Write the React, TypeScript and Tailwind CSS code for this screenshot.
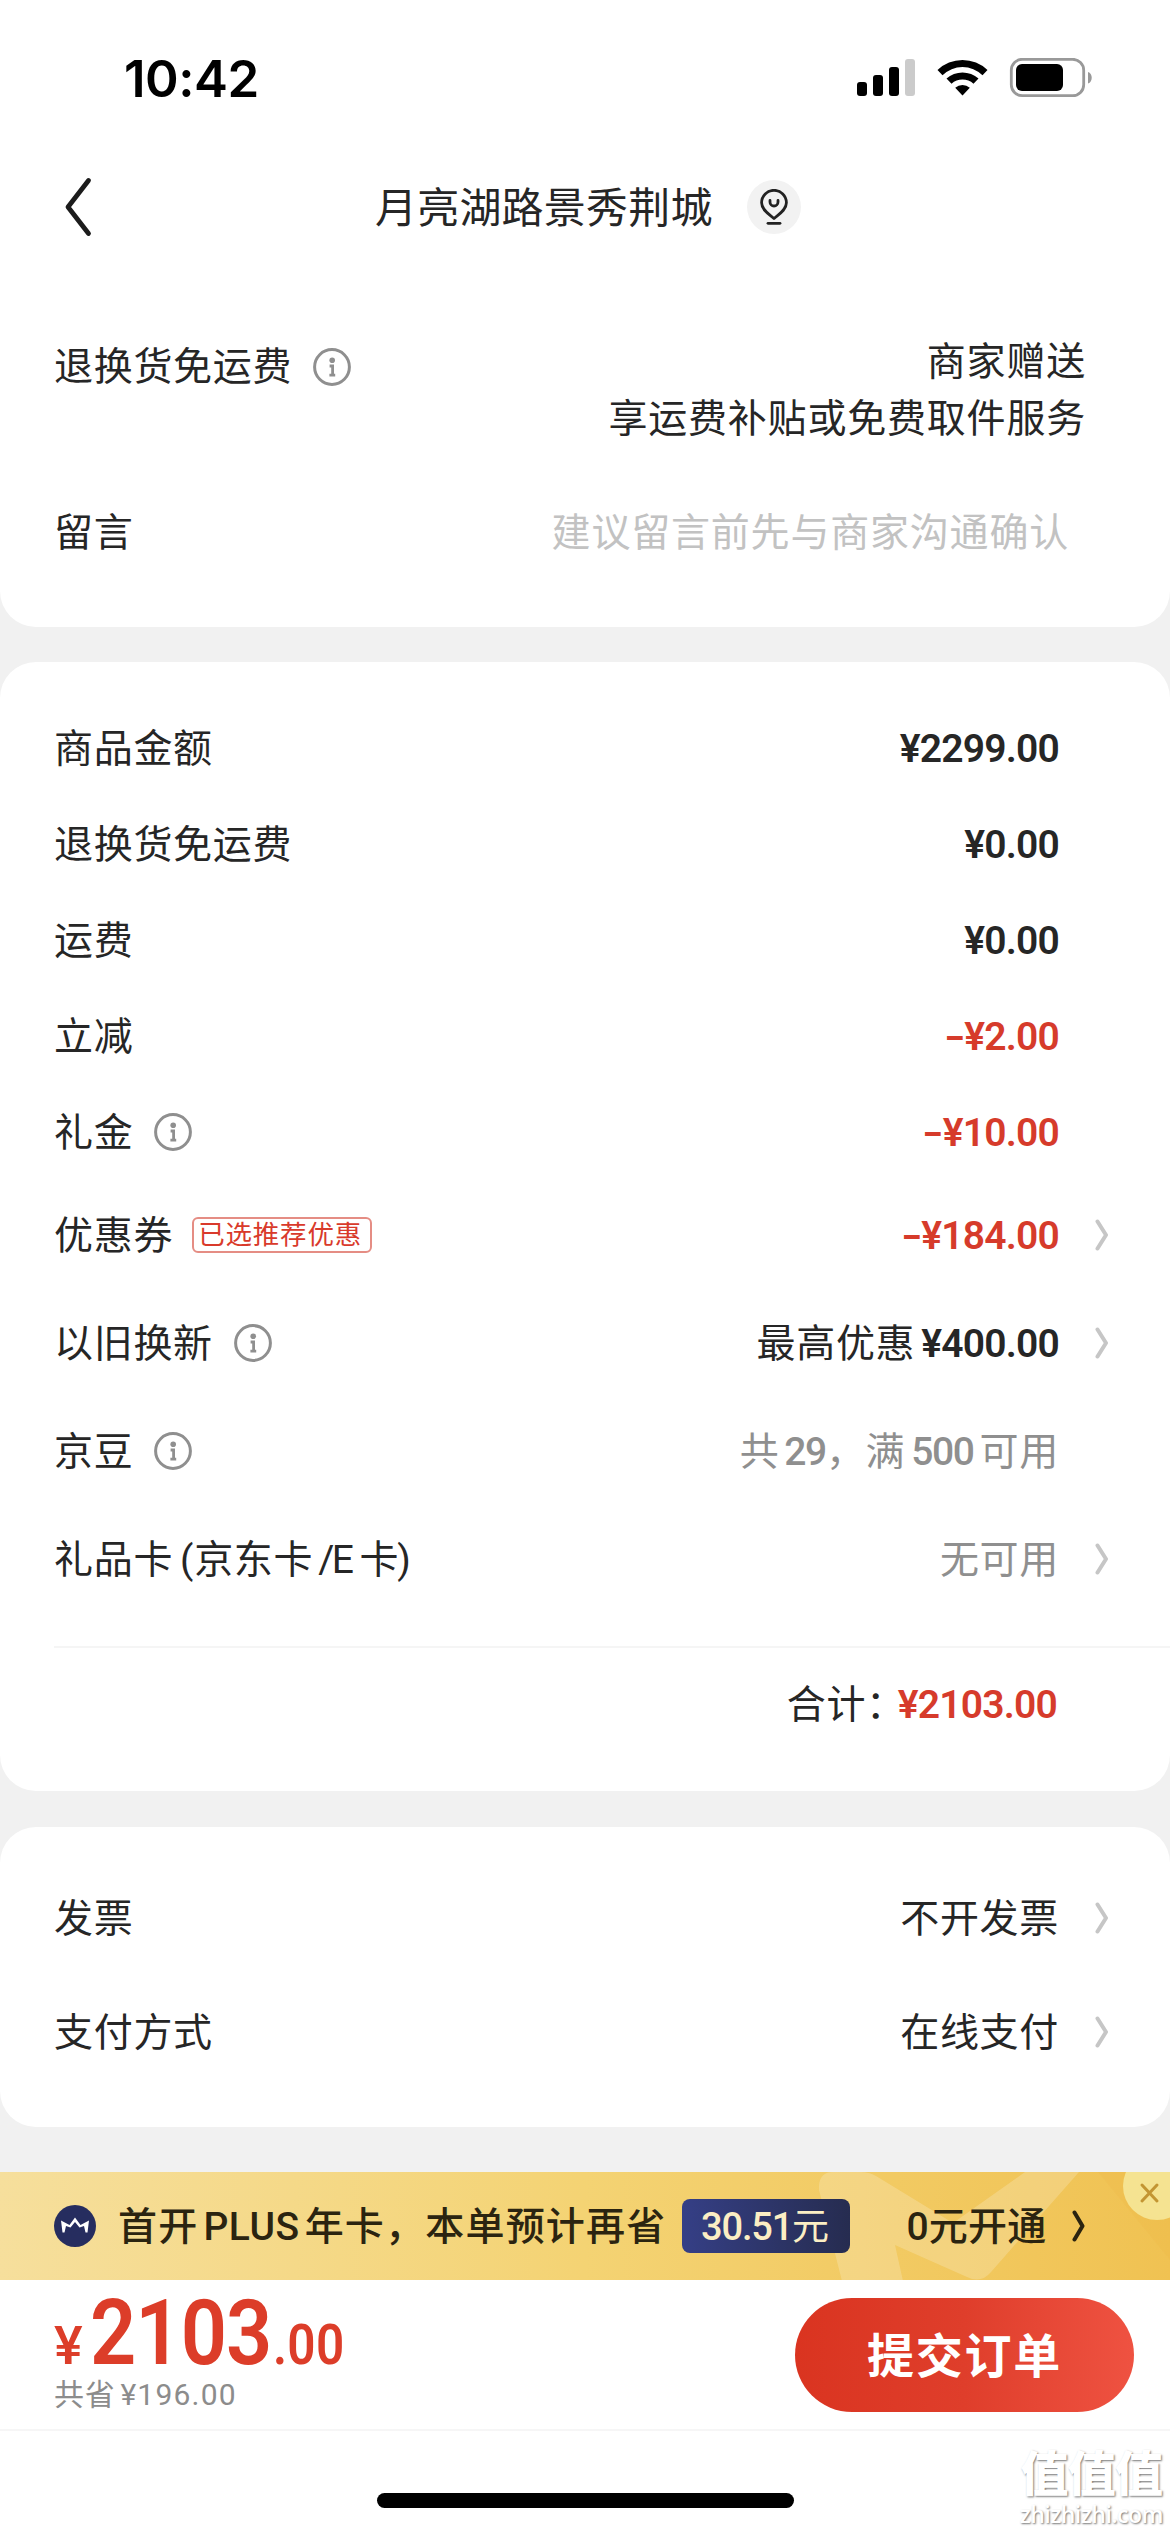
import React from 'react';

interface RowProps {
  label: React.ReactNode;
  info?: boolean;
  tag?: string;
  arrow?: boolean;
  className?: string;
  children: React.ReactNode;
}

const InfoIcon: React.FC = () => (
  <svg className="ml-[21px] h-[38px] w-[38px] shrink-0" viewBox="0 0 38 38" fill="none" stroke="#8f8f8f">
    <circle cx="19" cy="19" r="17.4" strokeWidth="3" />
    <circle cx="19.2" cy="12.2" r="2.8" fill="#8f8f8f" stroke="none" />
    <path d="M16.600 18h3v8.500M16.400 27.200h5.800" strokeWidth="2.800" />
  </svg>
);

const Arrow: React.FC = () => (
  <svg className="h-8 w-[14px]" viewBox="0 0 14 32" fill="none" stroke="#c6c6c6" strokeWidth="4" strokeLinecap="round" strokeLinejoin="round">
    <path d="M2.500 2.500l8.500 13.500L2.500 29.500" />
  </svg>
);

const Row: React.FC<RowProps> = ({ label, info, tag, arrow, className = 'h-24', children }) => (
  <div className={`flex items-center pl-[54px] pr-[61px] ${className}`}>
    <span className="pt-[3px]">{label}</span>
    {info && <InfoIcon />}
    {tag && (
      <span className="ml-[19px] flex h-9 w-[180px] items-center justify-center rounded-[6px] border-2 border-[#e58d84] pr-1 pt-px text-[26.5px] leading-none tracking-[0.8px] text-[#d93a2b]">
        {tag}
      </span>
    )}
    <div className="ml-auto pt-[3px]">{children}</div>
    <div className="ml-9 flex w-[14px]">{arrow && <Arrow />}</div>
  </div>
);

const Price: React.FC<{ value: string; red?: boolean; minus?: boolean }> = ({ value, red, minus }) => (
  <span className={`font-semibold tracking-[-0.8px] ${red ? 'text-[#d63b2b]' : ''}`}>
    {minus && <span className="inline-block origin-right scale-x-150">-</span>}
    {value}
  </span>
);

const StatusBar: React.FC = () => (
  <div className="flex h-[155px] items-center pl-[124px] pr-[77px]">
    <span className="pt-px font-['Inter',sans-serif] text-[51px] font-semibold leading-none tracking-[-0.5px] text-black">10:42</span>
    <svg className="ml-auto h-10 w-[236px]" viewBox="0 0 236 40">
      <rect x="0" y="24" width="10" height="14" rx="3" />
      <rect x="16" y="17" width="10" height="21" rx="3" />
      <rect x="32" y="9" width="10" height="29" rx="3" />
      <rect x="48" y="1" width="10" height="37" rx="3" fill="#cbcbcb" />
      <path d="M80.500 12a36 36 0 0 1 50 0l-5 5.200a28.500 28.500 0 0 0-40 0z" />
      <path d="M89.500 20.600a24 24 0 0 1 32 0l-5 5.200a16.500 16.500 0 0 0-22 0z" />
      <path d="M98.200 29.800a11 11 0 0 1 14.600 0l-7.300 7.700z" />
      <rect x="154.300" y="1.300" width="72.400" height="36.400" rx="11" fill="none" stroke="#999" strokeWidth="2.800" />
      <rect x="159" y="6" width="47" height="27" rx="6" />
      <path d="M231 14c5 1.500 5 10 0 11.500z" fill="#999" />
    </svg>
  </div>
);

const Header: React.FC = () => (
  <div className="flex h-[104px] items-center pl-16">
    <svg className="h-[62px] w-7" viewBox="0 0 28 62" fill="none" stroke="#1c1c1c" strokeWidth="4.800" strokeLinecap="round" strokeLinejoin="round">
      <path d="M24.500 4.500L4 31l20.500 26.500" />
    </svg>
    <span className="ml-[283px] pt-[3px] text-[42px] leading-none tracking-[0.2px]">月亮湖路景秀荆城</span>
    <div className="ml-[34px] flex h-[54px] w-[54px] items-center justify-center rounded-full bg-[#f2f2f2]">
      <svg className="h-9 w-7" viewBox="0 0 28 36" fill="none" stroke="#222" strokeWidth="2.800" strokeLinecap="round" strokeLinejoin="round">
        <path d="M14 29.500C10.500 26 1.600 21.500 1.600 13.700a12.400 12.400 0 0 1 24.800 0C26.400 21.500 17.500 26 14 29.500z" />
        <path d="M10 11.500v1.500a4 4 0 0 0 8 0v-1.500" />
        <path d="M8 34.300h12" />
      </svg>
    </div>
  </div>
);

const PlusBanner: React.FC = () => (
  <div className="relative mt-[45px] flex h-[108px] items-center overflow-hidden bg-gradient-to-r from-[#f6df9c] via-[#f4d373] to-[#f0c252] pl-[54px] font-medium text-[#2b2410]">
    <svg className="absolute right-0 top-0 h-[109px] w-[351px]" viewBox="0 0 351 109">
      <path d="M0 18Q-1 0 14 0h28q8 0 15 4l77 47 72-51h54l-88 100q-10 12-24 5L76 73l8 36H23z" fill="#fff" opacity="0.200" />
      <path d="M279 0h72v88z" fill="#e8ae3c" opacity="0.150" />
      <circle cx="338" cy="14" r="34" fill="#f5e391" />
      <path d="M323 13l15 16M338 13l-15 16" stroke="#c39532" strokeWidth="3" strokeLinecap="round" />
    </svg>
    <svg className="relative h-[42px] w-[42px]" viewBox="0 0 42 42">
      <circle cx="21" cy="21" r="21" fill="#262d5f" />
      <path d="M7 15.500l8.500 4.500L21 12.500l5.500 7.500 8.500-4.500-1.500 12h-2l-1.500-6.500-4.500 1.500L21 17l-4.500 5.500L12 21l-1.500 6.500h-2z" fill="#fff" />
    </svg>
    <span className="relative ml-[22px] whitespace-nowrap pt-[3px] tracking-[1.200px]">
      首开<span className="mx-[5px] tracking-[0.500px]">PLUS</span>年卡，本单预计再省
    </span>
    <span className="relative ml-[16px] flex h-[54px] w-[168px] shrink-0 items-center justify-center rounded-[8px] bg-gradient-to-r from-[#353f86] to-[#262c50] pr-1 pt-[2px] text-[38px] tracking-[-1.200px] text-[#fbeec4]">
      <span>30.51</span>
      <span className="text-[37px] font-normal">元</span>
    </span>
    <span className="relative ml-[56px] whitespace-nowrap pt-[3px] tracking-[0.200px]">0元开通</span>
    <svg className="relative ml-[26px] h-8 w-[14px]" viewBox="0 0 14 32" fill="none" stroke="#2b2410" strokeWidth="4" strokeLinecap="round" strokeLinejoin="round">
      <path d="M2.500 2.500L10.500 16l-8 13.500" />
    </svg>
  </div>
);

const SubmitBar: React.FC = () => (
  <div className="flex h-[151px] items-start border-b-2 border-[#f6f6f6] bg-white pl-[54px] pr-9 pt-[18px]">
    <div>
      <div className="flex h-[82px] items-baseline font-bold leading-[72px] text-[#dc3d29]">
        <span className="w-[36px] text-[54px] font-medium">¥</span>
        <span className="inline-block w-[183px] origin-left scale-x-90 text-[90px] font-semibold tracking-[-1px]">2103</span>
        <span className="inline-block origin-left scale-x-90 text-[55px] font-semibold tracking-[0.300px]">.00</span>
      </div>
      <div className="text-[30px] leading-[30px] text-[#8c8c8c]">
        共省<span className="ml-[5px] tracking-[1.200px]">¥196.00</span>
      </div>
    </div>
    <button className="ml-auto h-[114px] w-[339px] rounded-full bg-gradient-to-r from-[#da3420] via-[#df3e2b] to-[#ef5241] pt-[2px] text-[47px] font-bold tracking-[1.800px] text-white">
      提交订单
    </button>
  </div>
);

const App: React.FC = () => {
  return (
    <div className="relative flex h-[2532px] w-[1170px] flex-col overflow-hidden bg-[#f1f1f1] font-['Roboto','Noto_Sans_CJK_SC',sans-serif] text-[39px] leading-[57px] tracking-[0.700px] text-[#262626]">
      <div className="rounded-b-[36px] bg-white">
        <StatusBar />
        <Header />
        <section className="h-[368px] pl-[54px] pt-[75px]">
          <div className="flex items-start justify-between pr-[84px]">
            <div className="mt-[3px] flex items-center">
              <span className="pt-[2px]">退换货免运费</span>
              <InfoIcon />
            </div>
            <div className="text-right tracking-[0.800px]">
              <p>商家赠送</p>
              <p>享运费补贴或免费取件服务</p>
            </div>
          </div>
          <div className="mt-[57px] flex justify-between pr-[101px]">
            <span>留言</span>
            <span className="tracking-[0.800px] text-[#c2c2c2]">建议留言前先与商家沟通确认</span>
          </div>
        </section>
      </div>

      {/* Amount details */}
      <section className="mt-[35px] h-[1129px] rounded-[36px] bg-white pt-[38px]">
        <Row label="商品金额"><Price value="¥2299.00" /></Row>
        <Row label="退换货免运费"><Price value="¥0.00" /></Row>
        <Row label="运费"><Price value="¥0.00" /></Row>
        <Row label="立减"><Price value="¥2.00" red minus /></Row>
        <Row label="礼金" info><Price value="¥10.00" red minus /></Row>
        <Row label="优惠券" tag="已选推荐优惠" arrow className="h-[109px]"><Price value="¥184.00" red minus /></Row>
        <Row label="以旧换新" info arrow className="h-[108px]">
          最高优惠<span className="ml-[6px]"><Price value="¥400.00" /></span>
        </Row>
        <Row label="京豆" info className="h-[108px]">
          <span className="text-[#8f8f8f]">
            共<span className="ml-[5px] font-medium tracking-[-1.400px]">29</span>，满<span className="mx-[6px] font-medium tracking-[-1.400px]">500</span>可用
          </span>
        </Row>
        <Row
          label={<>礼品卡<span className="ml-[7px]">(</span>京东卡<span className="ml-[5px] mr-[8px] tracking-[-2.500px]">/E</span>卡<span className="ml-[-2px]">)</span></>}
          arrow
          className="h-[108px]"
        >
          <span className="text-[#8f8f8f]">无可用</span>
        </Row>
        <div className="ml-[54px] mt-[33px] border-t-2 border-[#f5f5f5]"></div>
        <Row label="" className="h-[111px]">
          合计：<span className="ml-[-8px] mr-[2px]"><Price value="¥2103.00" red /></span>
        </Row>
      </section>

      {/* Invoice and payment */}
      <section className="mt-9 h-[300px] rounded-[36px] bg-white pt-[34px]">
        <Row label="发票" arrow className="h-[114px]">不开发票</Row>
        <Row label="支付方式" arrow className="h-[114px]">在线支付</Row>
      </section>

      <PlusBanner />
      <SubmitBar />

      <div className="flex flex-1 justify-center bg-white pt-[62px]">
        <div className="h-[15px] w-[417px] rounded-full bg-black"></div>
      </div>

      {/* Watermark */}
      <div className="absolute bottom-[4px] right-[7px] text-center text-white [text-shadow:1px_1px_2px_#777]">
        <p className="text-[48px] font-black leading-[50px] tracking-[-0.800px]">值值值</p>
        <p className="font-['Open_Sans',sans-serif] text-[23px] font-semibold leading-[28px] tracking-[-0.500px]">zhizhizhi.com</p>
      </div>
    </div>
  );
};

export default App;
